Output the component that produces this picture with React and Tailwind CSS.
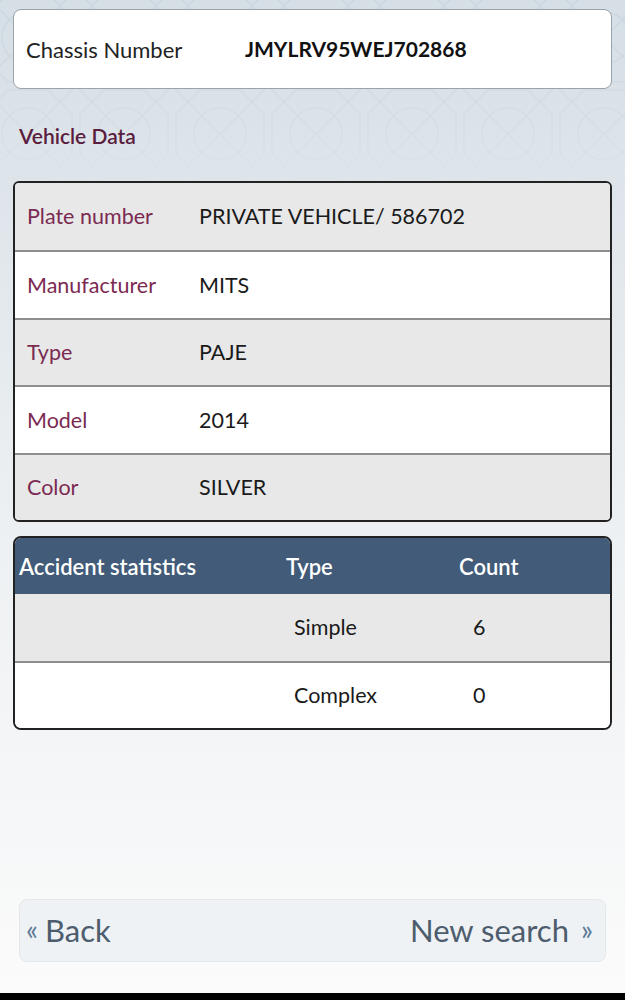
const vehicle = [
  ["Plate number", "PRIVATE VEHICLE/ 586702"],
  ["Manufacturer", "MITS"],
  ["Type", "PAJE"],
  ["Model", "2014"],
  ["Color", "SILVER"],
];

const accidents = [
  ["Simple", "6"],
  ["Complex", "0"],
];

function Pattern() {
  return (
    <svg className="absolute left-0 top-0 w-full h-[200px] pointer-events-none" aria-hidden="true">
      <defs>
        <pattern id="geo" width="96" height="96" patternUnits="userSpaceOnUse" x="-20" y="-10">
          <g fill="none" stroke="#c9d3db" strokeWidth="1.5">
            <circle cx="48" cy="48" r="26" />
            <path d="M0 0 L96 96 M96 0 L0 96" />
            <path d="M28 4 H68 L92 28 V68 L68 92 H28 L4 68 V28 Z" />
          </g>
        </pattern>
        <linearGradient id="fade" x1="0" y1="0" x2="0" y2="1">
          <stop offset="0" stopColor="white" stopOpacity="1" />
          <stop offset="1" stopColor="white" stopOpacity="0" />
        </linearGradient>
        <mask id="m">
          <rect width="100%" height="100%" fill="url(#fade)" />
        </mask>
      </defs>
      <rect width="100%" height="100%" fill="url(#geo)" mask="url(#m)" opacity="0.8" />
    </svg>
  );
}

export default function App() {
  return (
    <div
      className="relative w-[625px] h-[1000px] overflow-hidden bg-gradient-to-b from-[#d6dfe6] via-[#eef1f3] via-55% to-[#fbfbfb]"
      style={{ fontFamily: "Lato, 'Open Sans', sans-serif" }}
    >
      <Pattern />
      <div className="relative flex flex-col h-full">
        <div className="mx-[13px] mt-[9px] h-[80px] flex items-center rounded-[8px] border border-[#9aa3aa] bg-white px-[12px]">
          <span className="w-[219px] text-[22px] text-[#222]">Chassis Number</span>
          <span className="text-[21px] font-bold text-[#111]">JMYLRV95WEJ702868</span>
        </div>

        <div className="mt-[31px] ml-[19px] text-[21px] font-semibold text-[#5b1d3e]">Vehicle Data</div>

        <div className="mx-[13px] mt-[29px] rounded-[6px] border-2 border-[#222] overflow-hidden">
          {vehicle.map(([k, v], i) => (
            <div
              key={k}
              className={`h-[67.5px] flex items-center px-[12px] text-[21.5px] ${i % 2 === 0 ? "bg-[#e8e8e8]" : "bg-white"} ${i > 0 ? "border-t-2 border-[#8e8e8e]" : ""}`}
            >
              <span className="w-[172px] text-[#7b2a52]">{k}</span>
              <span className="text-[#1a1a1a]">{v}</span>
            </div>
          ))}
        </div>

        <div className="mx-[13px] mt-[14px] rounded-[8px] border-2 border-[#222] overflow-hidden">
          <div className="h-[56px] flex items-center bg-[#415b78] text-white text-[22px] font-semibold">
            <span className="w-[271px] pl-[4px]">Accident statistics</span>
            <span className="w-[173px]">Type</span>
            <span>Count</span>
          </div>
          {accidents.map(([t, c], i) => (
            <div
              key={t}
              className={`h-[67px] flex items-center text-[21.5px] text-[#1a1a1a] ${i % 2 === 0 ? "bg-[#e8e8e8]" : "bg-white border-t-2 border-[#8e8e8e]"}`}
            >
              <span className="w-[279px]" />
              <span className="w-[179px]">{t}</span>
              <span>{c}</span>
            </div>
          ))}
        </div>

        <div className="mt-auto mb-[31px] mx-[19px] h-[63px] flex items-center justify-between rounded-[8px] border border-[#e3e8ec] bg-[#eef2f5] pl-[6px] pr-[12px] text-[#4d5d6d]">
          <span className="text-[31px]">
            <span className="text-[28px] align-[2px] mr-[7px] text-[#5d7a96]">«</span>Back
          </span>
          <span className="text-[31px]">
            New search<span className="text-[28px] align-[2px] ml-[12px] text-[#5d7a96]">»</span>
          </span>
        </div>
        <div className="h-[7px] bg-black" />
      </div>
    </div>
  );
}
